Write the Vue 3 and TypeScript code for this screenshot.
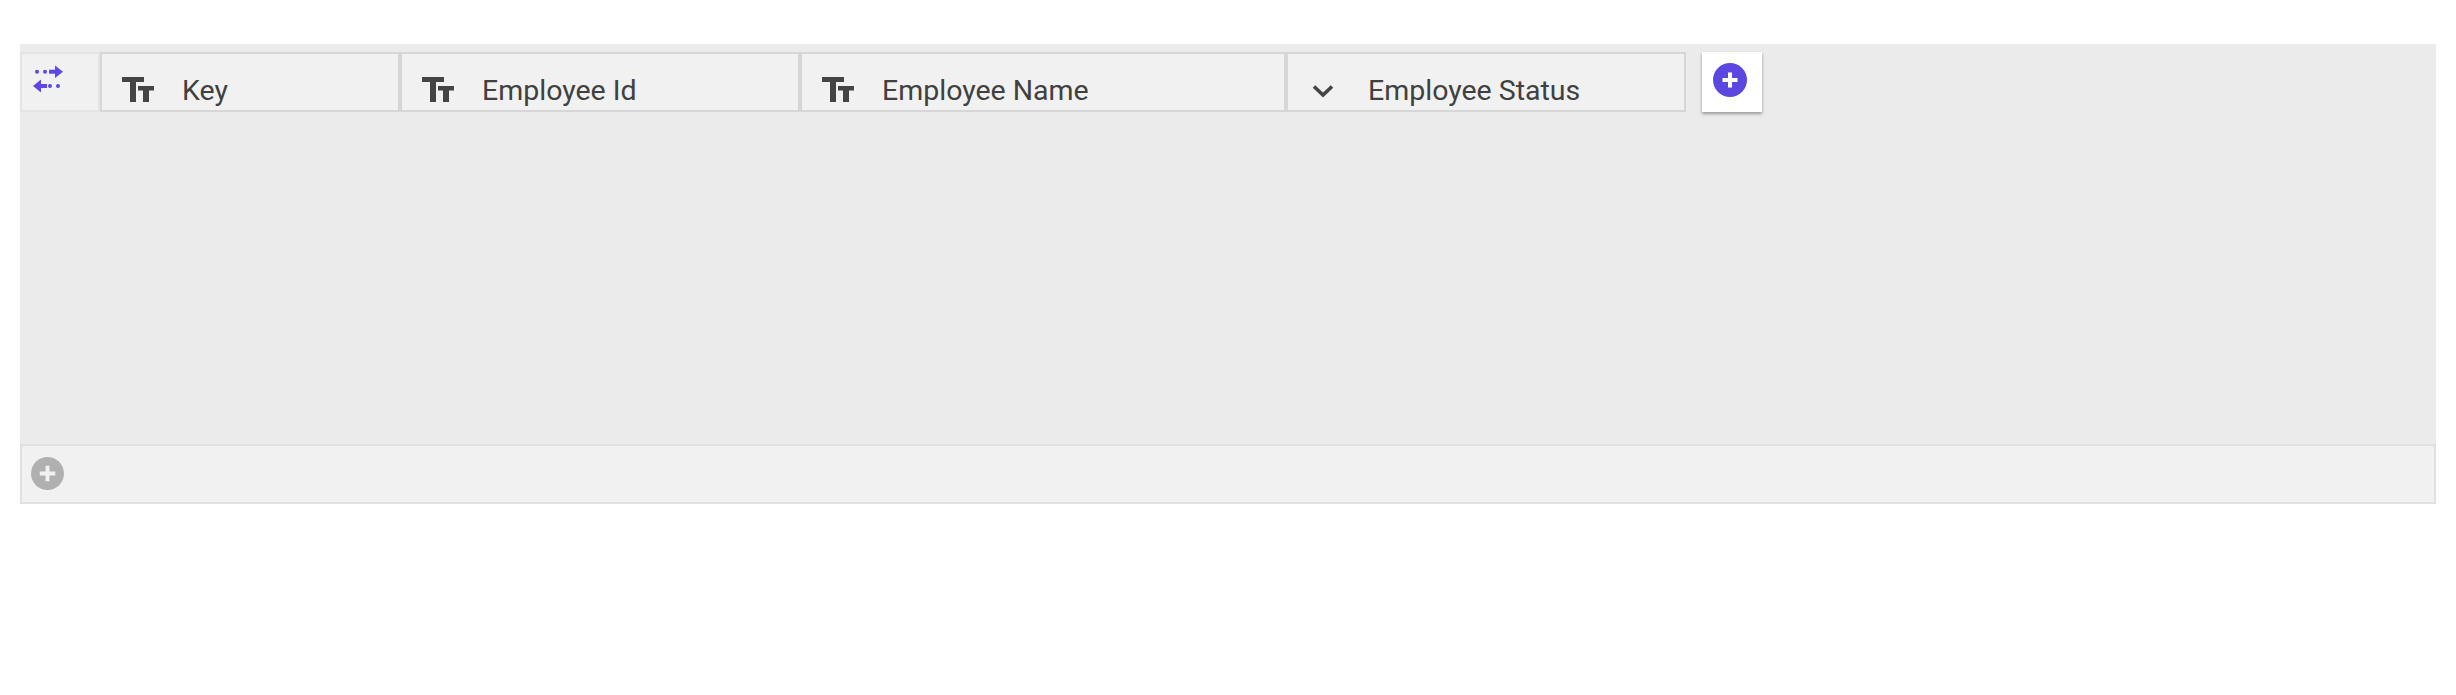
<script setup lang="ts">
interface Column { label: string; width: number; icon: 'text' | 'chevron' }
const columns: Column[] = [
  { label: 'Key', width: 300, icon: 'text' },
  { label: 'Employee Id', width: 400, icon: 'text' },
  { label: 'Employee Name', width: 486, icon: 'text' },
  { label: 'Employee Status', width: 400, icon: 'chevron' },
]
</script>

<template>
  <div class="page">
    <div class="panel">
      <div class="body">
        <div class="head">
          <div class="swap">
            <svg width="32" height="30" viewBox="0 0 32 30">
              <g fill="#5b48e6">
                <circle cx="6" cy="8.700" r="2" /><circle cx="14" cy="8.700" r="2" />
                <rect x="18" y="6.700" width="7" height="4" /><path d="M24 2.500 32 8.700l-8 6.300z" />
                <circle cx="27" cy="23" r="2" /><circle cx="19" cy="23" r="2" />
                <rect x="9" y="21" width="7" height="4" /><path d="M10 16.500 2 23l8 6.500z" />
              </g>
            </svg>
          </div>
          <div v-for="c in columns" :key="c.label" class="cell" :style="{ width: c.width + 'px' }">
            <span class="icon">
              <svg v-if="c.icon === 'text'" width="32" height="25" viewBox="0 0 32 25">
                <path fill="#444" d="M0 0h22v5h-8v20H8V5H0zM16 9h16v4.500h-5V25h-6V13.500h-5z" />
              </svg>
              <svg v-else class="chev" width="22" height="14" viewBox="0 0 22 14">
                <path fill="none" stroke="#444" stroke-width="3.600" d="M2 2.500 11 11l9-8.500" />
              </svg>
            </span>
            <span class="label">{{ c.label }}</span>
          </div>
          <div class="add">
            <svg width="34" height="34" viewBox="0 0 34 34">
              <circle cx="17" cy="17" r="17" fill="#5b48e0" />
              <path d="M17 9.500v15M9.500 17h15" stroke="#fff" stroke-width="4" />
            </svg>
          </div>
        </div>
      </div>
      <div class="foot">
        <svg width="33" height="33" viewBox="0 0 34 34">
          <circle cx="17" cy="17" r="17" fill="#b0b0b0" />
          <path d="M17 9v16M9 17h16" stroke="#f1f1f1" stroke-width="4" />
        </svg>
      </div>
    </div>
  </div>
</template>

<style>
html, body { margin: 0; background: #fff; }
</style>

<style scoped>
.page { padding: 44px 20px 0; font-family: Roboto, "Liberation Sans", sans-serif; }
.panel { width: 2416px; background: #ebebeb; }
.body { height: 400px; padding-top: 8px; box-sizing: border-box; }
.head { display: flex; height: 60px; }
.swap {
  width: 80px; box-sizing: border-box; background: #f1f1f1; border: 2px solid #e4e4e4;
  padding: 9px 0 0 9px;
}
.swap svg { display: block; }
.cell {
  box-sizing: border-box; background: #f1f1f1; border: 2px solid #d6d6d6;
  display: flex; align-items: flex-start; padding: 21px 0 0 20px;
}
.icon { width: 40px; height: 25px; margin: 2px 20px 0 0; display: flex; align-items: center; flex: none; }
.chev { margin: 3px 0 0 4px; }
.label { font-size: 28.500px; line-height: 32px; color: #404040; }
.add {
  margin-left: 16px; width: 60px; height: 60px; background: #fff; box-shadow: 0 2px 3px rgba(0,0,0,.35);
  box-sizing: border-box; padding: 11px 0 0 11px;
}
.add svg { display: block; }
.foot {
  height: 60px; box-sizing: border-box; background: #f1f1f1; border: 2px solid #e0e0e0;
  display: flex; align-items: flex-start; padding: 11px 0 0 9px;
}
</style>
